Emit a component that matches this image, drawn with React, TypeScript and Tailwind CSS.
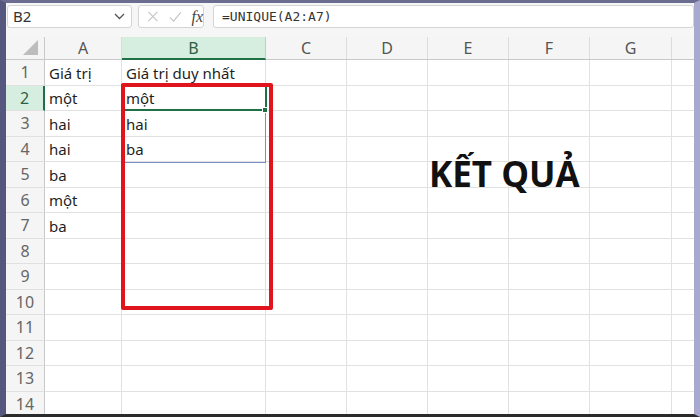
import React from "react";

const cols = [
  { l: "A", w: "w-[77px]" },
  { l: "B", w: "w-[144px]" },
  { l: "C", w: "w-[81px]" },
  { l: "D", w: "w-[81px]" },
  { l: "E", w: "w-[81px]" },
  { l: "F", w: "w-[81px]" },
  { l: "G", w: "w-[82px]" },
  { l: "", w: "w-[40px]" },
];

const data: Record<number, [string, string]> = {
  1: ["Giá trị", "Giá trị duy nhất"],
  2: ["một", "một"],
  3: ["hai", "hai"],
  4: ["hai", "ba"],
  5: ["ba", ""],
  6: ["một", ""],
  7: ["ba", ""],
};

const rows = Array.from({ length: 14 }, (_, i) => i + 1);

export default function App() {
  return (
    <div
      className="w-[700px] h-[417px] overflow-hidden border-l-[6px] border-l-[#55577f] border-t-[3px] border-t-[#6c6c90] border-r-[6px] border-r-[#a9a9cf] border-b-[3px] border-b-[#2b2b2b] bg-[#f6f6f6] flex flex-col"
      style={{ fontFamily: '"Noto Sans", "Open Sans", sans-serif' }}
    >
      {/* formula bar */}
      <div className="h-[34px] shrink-0 flex items-start pt-[2px] pl-[1px] gap-[6px]">
        <div className="w-[125px] h-[23px] bg-white border border-[#d4d4d4] rounded-[3px] flex items-center justify-between pl-[5px] pr-[6px]">
          <span className="text-[15px] text-[#333] leading-none">B2</span>
          <svg width="11" height="7" viewBox="0 0 11 7" fill="none">
            <path d="M1 1l4.5 4.5L10 1" stroke="#555" strokeWidth="1.3" />
          </svg>
        </div>
        <div className="w-[66px] h-[23px] bg-white border border-[#d4d4d4] rounded-[3px] flex items-center pl-[8px] gap-[10px]">
          <svg width="13" height="13" viewBox="0 0 13 13" fill="none">
            <path d="M1.5 1.5l10 10M11.5 1.5l-10 10" stroke="#c4c4c4" strokeWidth="1.2" />
          </svg>
          <svg width="14" height="12" viewBox="0 0 14 12" fill="none">
            <path d="M1 6.5l4 4L13 1" stroke="#c4c4c4" strokeWidth="1.2" />
          </svg>
          <span
            className="text-[16px] italic text-[#444] leading-none"
            style={{ fontFamily: '"Liberation Serif", "DejaVu Serif", serif' }}
          >
            fx
          </span>
        </div>
        <div className="flex-1 h-[23px] bg-white border border-[#d4d4d4] rounded-[3px] flex items-center pl-[8px] ml-[3px]">
          <span
            className="text-[13px] text-[#333] leading-none"
            style={{ fontFamily: '"DejaVu Sans Mono", "Liberation Mono", monospace' }}
          >
            =UNIQUE(A2:A7)
          </span>
        </div>
      </div>

      {/* grid */}
      <div className="relative flex-1">
        {/* header row */}
        <div className="flex h-[23px] bg-[#f5f5f5] border-b border-[#c9c9c9]">
          <div className="w-[39px] shrink-0 border-r border-[#c9c9c9] flex items-end justify-end pr-[6px] pb-[4px]">
            <svg width="15" height="15" viewBox="0 0 15 15">
              <path d="M15 0L15 15L0 15Z" fill="#bdbdbd" />
            </svg>
          </div>
          {cols.map((c) => (
            <div
              key={c.l + c.w}
              className={`${c.w} shrink-0 flex items-center justify-center text-[16px] border-r ${
                c.l === "B"
                  ? "bg-[#d6eee0] text-[#2f5f44] border-r-[#c9c9c9] border-b-2 border-b-[#1e7145] -mb-px"
                  : "text-[#555] border-r-[#dcdcdc]"
              }`}
            >
              {c.l}
            </div>
          ))}
        </div>
        {rows.map((r) => (
          <div key={r} className="flex h-[25.5px]">
            <div
              className={`w-[39px] shrink-0 flex items-center justify-center text-[16px] border-b border-b-[#e0e0e0] ${
                r === 2
                  ? "bg-[#d6eee0] text-[#2f5f44] border-r-2 border-r-[#1e7145]"
                  : "bg-[#f5f5f5] text-[#666] border-r border-r-[#c9c9c9]"
              }`}
            >
              {r}
            </div>
            {cols.map((c, ci) => (
              <div
                key={c.l + c.w}
                className={`${c.w} shrink-0 bg-white border-r border-b border-[#e1e1e1] flex items-center pl-[4px] pt-[1px] text-[15px] text-[#1f1f1f] whitespace-nowrap overflow-hidden`}
              >
                {ci < 2 && data[r] ? data[r][ci] : ""}
              </div>
            ))}
          </div>
        ))}

        {/* blue range B2:B4 */}
        <div className="absolute left-[116px] top-[48px] w-[144px] h-[78px] border border-[#7690c6] pointer-events-none" />
        {/* active cell */}
        <div className="absolute left-[115px] top-[47px] w-[146px] h-[27px] border-2 border-[#1e7145] pointer-events-none" />
        {/* fill handle */}
        <div className="absolute left-[256px] top-[70px] w-[6px] h-[6px] bg-[#1e7145] border border-white pointer-events-none" />
        {/* red highlight */}
        <div className="absolute left-[115px] top-[46px] w-[152px] h-[227px] border-[4px] border-[#e0141c] rounded-[2px] pointer-events-none" />
        {/* KẾT QUẢ */}
        <div
          className="absolute left-[423px] top-[119px] text-[35px] font-bold leading-none text-[#111] whitespace-nowrap"
          style={{ fontFamily: '"Open Sans", "Noto Sans", sans-serif' }}
        >
          KẾT QUẢ
        </div>
      </div>
    </div>
  );
}
